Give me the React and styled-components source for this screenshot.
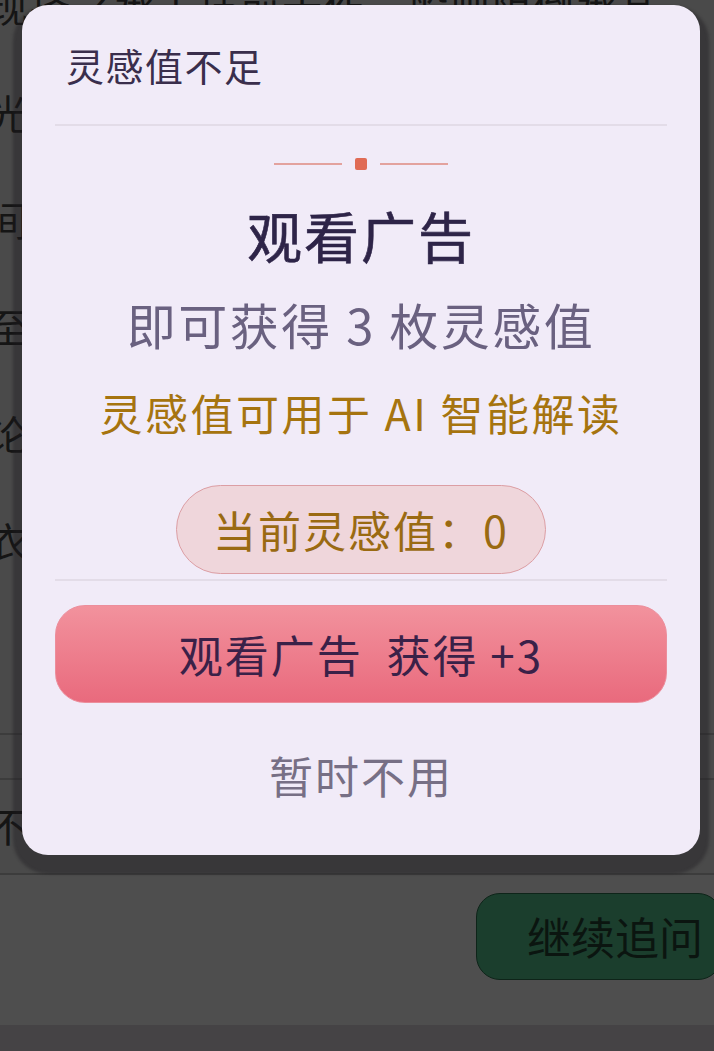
import React from 'react';
import styled, { createGlobalStyle } from 'styled-components';

const GlobalStyle = createGlobalStyle`
  html, body {
    margin: 0;
    padding: 0;
    background: #4b4b4b;
  }
  body {
    font-family: 'Noto Sans CJK SC', 'Noto Sans', sans-serif;
    overflow: hidden;
  }
`;

const bgLines = [
  '现择之承工技前十作一般则阻倒承基',
  '光、你的选择会让结果变得不同、',
  '间是可以改变的，当然也可以不变',
  '至于未来会怎样，一切都在你手中',
  '论述之前先看看这件事的来龙去脉么',
  '衣食住行皆有其道，顺其自然即可',
];

function App() {
  return (
    <>
      <GlobalStyle />
      <Screen>
        <BgPage>
          <BgText>
            {bgLines.map((line, i) => (
              <BgLine key={i}>{line}</BgLine>
            ))}
          </BgText>
          <BgRule $h={45} />
          <BgRule $h={95}>
            <BgLine>不知道接下来该怎么做</BgLine>
          </BgRule>
          <BgFooter>
            <FollowButton>继续追问</FollowButton>
          </BgFooter>
          <BgBar />
        </BgPage>

        <Dialog>
          <Header>
            <Title>灵感值不足</Title>
          </Header>
          <Divider />
          <Ornament>
            <OrnLine />
            <OrnDot />
            <OrnLine />
          </Ornament>
          <Heading>观看广告</Heading>
          <Subtitle>即可获得 3 枚灵感值</Subtitle>
          <Hint>灵感值可用于 AI 智能解读</Hint>
          <Pill>当前灵感值：0</Pill>
          <Divider $top={5} />
          <WatchButton>观看广告&nbsp;&nbsp;获得 +3</WatchButton>
          <Dismiss>暂时不用</Dismiss>
        </Dialog>
      </Screen>
    </>
  );
}

export default App;

const Screen = styled.div`
  position: relative;
  width: 714px;
  height: 1051px;
  overflow: hidden;
`;

const BgPage = styled.div`
  display: flex;
  flex-direction: column;
  height: 1051px;
  background: #4a4a4a;
  color: #151515;
`;

const BgText = styled.div`
  height: 783px;
  flex-shrink: 0;
  margin-top: -48px;
  margin-left: -12px;
  border-bottom: 2px solid #3c3c3c;
  box-sizing: border-box;
  overflow: hidden;
`;

const BgLine = styled.div`
  font-size: 40px;
  line-height: 107px;
  white-space: nowrap;
  letter-spacing: 2px;
`;

const BgRule = styled.div`
  height: ${p => p.$h}px;
  flex-shrink: 0;
  border-bottom: 2px solid #3c3c3c;
  box-sizing: border-box;
  margin-left: -12px;
  overflow: hidden;

  ${BgLine} {
    line-height: 90px;
  }
`;

const BgFooter = styled.div`
  flex: 1;
  display: flex;
  justify-content: flex-end;
  align-items: flex-start;
  padding-top: 18px;
  background: #4e4e4e;
`;

const FollowButton = styled.div`
  width: 246px;
  height: 87px;
  margin-right: -8px;
  box-sizing: border-box;
  border: 1px solid #0e2419;
  border-radius: 24px;
  background: #1b3e2d;
  color: #0b1510;
  font-size: 44px;
  line-height: 84px;
  padding-left: 50px;
  white-space: nowrap;
`;

const BgBar = styled.div`
  height: 26px;
  flex-shrink: 0;
  background: #454345;
`;

const Dialog = styled.div`
  position: absolute;
  top: 5px;
  left: 22px;
  width: 678px;
  height: 850px;
  box-sizing: border-box;
  border-radius: 26px;
  background: #f1ebf8;
  box-shadow: 0 10px 3px 9px rgba(30, 28, 32, 0.4);
  display: flex;
  flex-direction: column;
  align-items: center;
`;

const Header = styled.div`
  align-self: stretch;
  height: 119px;
  display: flex;
  align-items: center;
  padding-left: 44px;
`;

const Title = styled.div`
  font-size: 38px;
  color: #3a2e4c;
  letter-spacing: 1.5px;
`;

const Divider = styled.div`
  align-self: stretch;
  height: 2px;
  margin: ${p => p.$top || 0}px 33px 0;
  background: #e3dce8;
`;

const Ornament = styled.div`
  display: flex;
  align-items: center;
  gap: 13px;
  margin-top: 32px;
  height: 12px;
`;

const OrnLine = styled.div`
  width: 68px;
  height: 2px;
  background: #e3a29e;
`;

const OrnDot = styled.div`
  width: 12px;
  height: 12px;
  border-radius: 2px;
  background: #e06b55;
`;

const Heading = styled.div`
  margin-top: 26px;
  font-size: 55px;
  line-height: 76px;
  font-weight: 400;
  color: #2e2448;
  letter-spacing: 2px;
  -webkit-text-stroke: 0.6px #2e2448;
`;

const Subtitle = styled.div`
  margin-top: 20px;
  font-size: 49px;
  line-height: 64px;
  color: #6a6180;
  letter-spacing: 2.5px;
`;

const Hint = styled.div`
  margin-top: 27px;
  font-size: 43px;
  line-height: 58px;
  color: #a6740f;
  letter-spacing: 2.5px;
`;

const Pill = styled.div`
  margin-top: 44px;
  height: 89px;
  box-sizing: border-box;
  padding: 0 36px;
  border-radius: 45px;
  border: 1.5px solid #dc9ea4;
  background: #efd6db;
  color: #9a6a12;
  font-size: 43px;
  line-height: 86px;
  letter-spacing: 2px;
`;

const WatchButton = styled.div`
  align-self: stretch;
  margin: 24px 33px 0;
  height: 98px;
  box-sizing: border-box;
  border-radius: 30px;
  border: 1px solid #ec8e9c;
  background: linear-gradient(180deg, #f2929d 0%, #e96a7d 100%);
  color: #3a2148;
  font-size: 44px;
  font-weight: 400;
  line-height: 96px;
  text-align: center;
  letter-spacing: 2px;
`;

const Dismiss = styled.div`
  margin-top: 42px;
  font-size: 44px;
  line-height: 60px;
  color: #776f85;
  letter-spacing: 2px;
`;
